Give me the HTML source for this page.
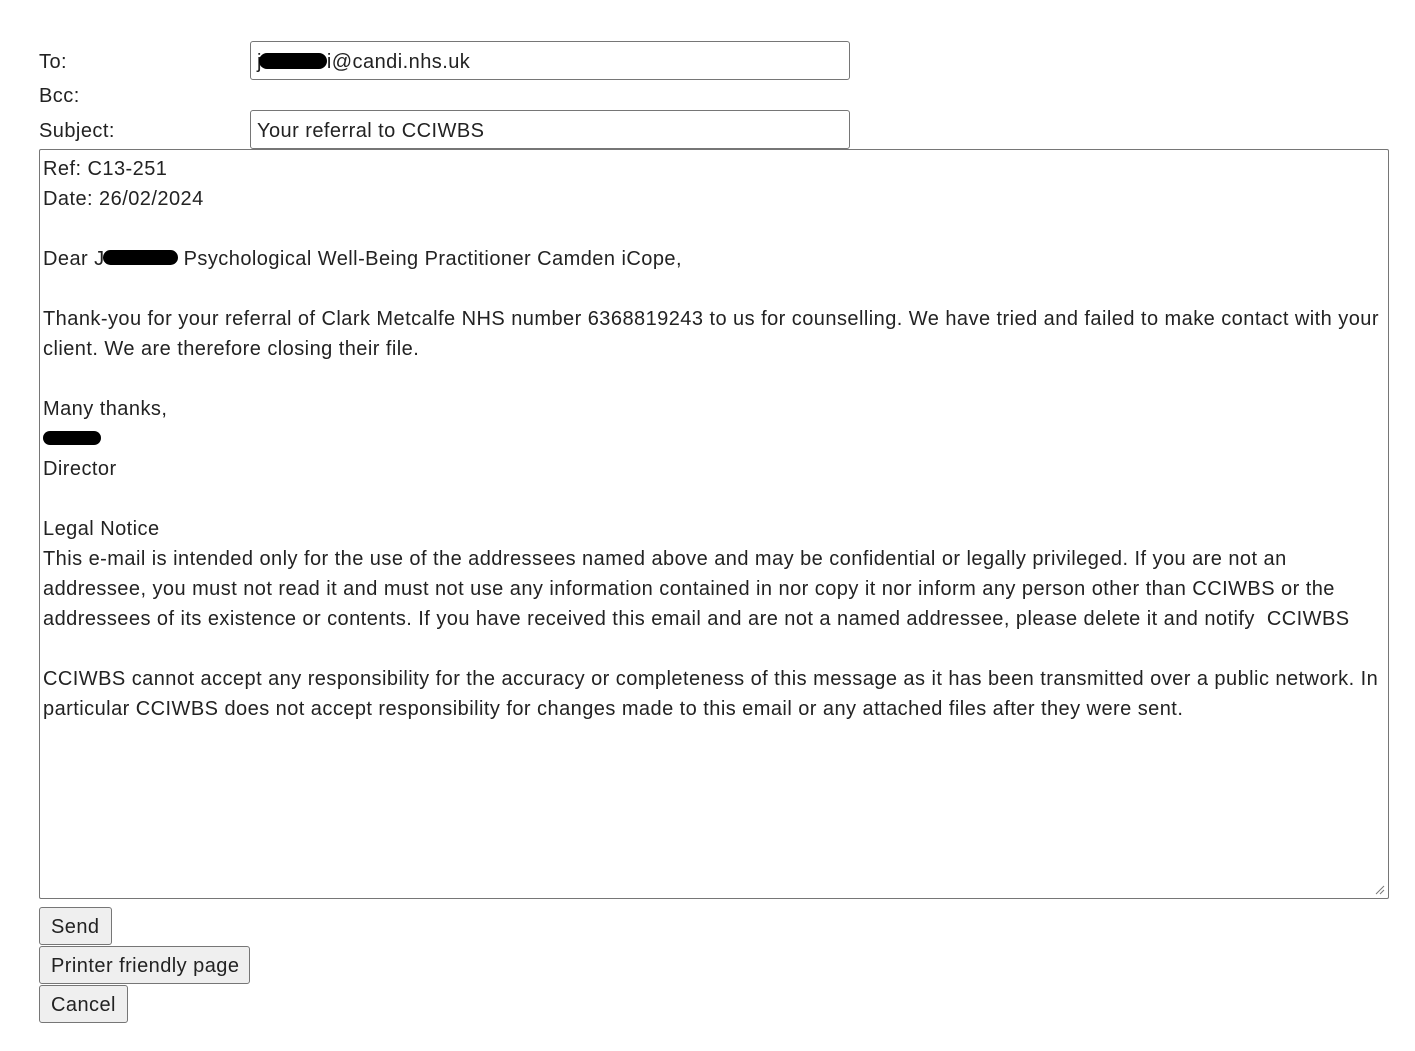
<!DOCTYPE html>
<html><head><meta charset="utf-8"><style>
body{margin:0;background:#fff;font-family:"Liberation Sans",Arial,sans-serif;font-size:20px;color:#222;letter-spacing:0.45px;}
.a{position:absolute;white-space:nowrap;}
.lbl{line-height:24px;}
.inp{position:absolute;left:250px;width:598px;height:37px;border:1px solid #767676;border-radius:3px;box-sizing:content-box;}
.inp span{position:absolute;left:6px;top:8px;line-height:24px;}
.ta{position:absolute;left:39px;top:149px;width:1348px;height:748px;border:1px solid #767676;border-radius:2px;}
.tx{position:absolute;left:3px;top:4px;line-height:30px;white-space:nowrap;}
.btn{position:absolute;left:39px;height:38px;border:1px solid #767676;border-radius:3px;background:#efefef;box-sizing:border-box;line-height:38px;padding:0 11px;white-space:nowrap;overflow:hidden;}
.red{display:inline-block;background:#000;border-radius:8px;vertical-align:middle;}
</style></head><body>
<div class="a lbl" style="left:39px;top:50px">To:</div>
<div class="a lbl" style="left:39px;top:84px">Bcc:</div>
<div class="a lbl" style="left:39px;top:119px">Subject:</div>
<div class="inp" style="top:41px"><span>j<span class="red" style="position:relative;left:0;top:-2px;width:68px;height:16px;margin-left:-3px"></span>i@candi.nhs.uk</span></div>
<div class="inp" style="top:110px"><span>Your referral to CCIWBS</span></div>
<div class="ta"><div class="tx">Ref: C13-251<br>Date: 26/02/2024<br><br>Dear J<span class="red" style="width:75px;height:15px;margin-left:-2px;margin-right:6px;position:relative;top:-2px"></span>Psychological Well-Being Practitioner Camden iCope,<br><br>Thank-you for your referral of Clark Metcalfe NHS number 6368819243 to us for counselling. We have tried and failed to make contact with your<br>client. We are therefore closing their file.<br><br>Many thanks,<br><span class="red" style="width:58px;height:14px;position:relative;top:-2px"></span><br>Director<br><br>Legal Notice<br>This e-mail is intended only for the use of the addressees named above and may be confidential or legally privileged. If you are not an<br>addressee, you must not read it and must not use any information contained in nor copy it nor inform any person other than CCIWBS or the<br>addressees of its existence or contents. If you have received this email and are not a named addressee, please delete it and notify &nbsp;CCIWBS<br><br>CCIWBS cannot accept any responsibility for the accuracy or completeness of this message as it has been transmitted over a public network. In<br>particular CCIWBS does not accept responsibility for changes made to this email or any attached files after they were sent.</div>
<svg style="position:absolute;right:3px;bottom:3px" width="10" height="10"><path d="M1 9L9 1M5 9L9 5" stroke="#777" stroke-width="1"/></svg></div>
<div class="btn" style="top:907px;width:73px">Send</div>
<div class="btn" style="top:946px;width:211px">Printer friendly page</div>
<div class="btn" style="top:985px;width:89px">Cancel</div>
</body></html>
